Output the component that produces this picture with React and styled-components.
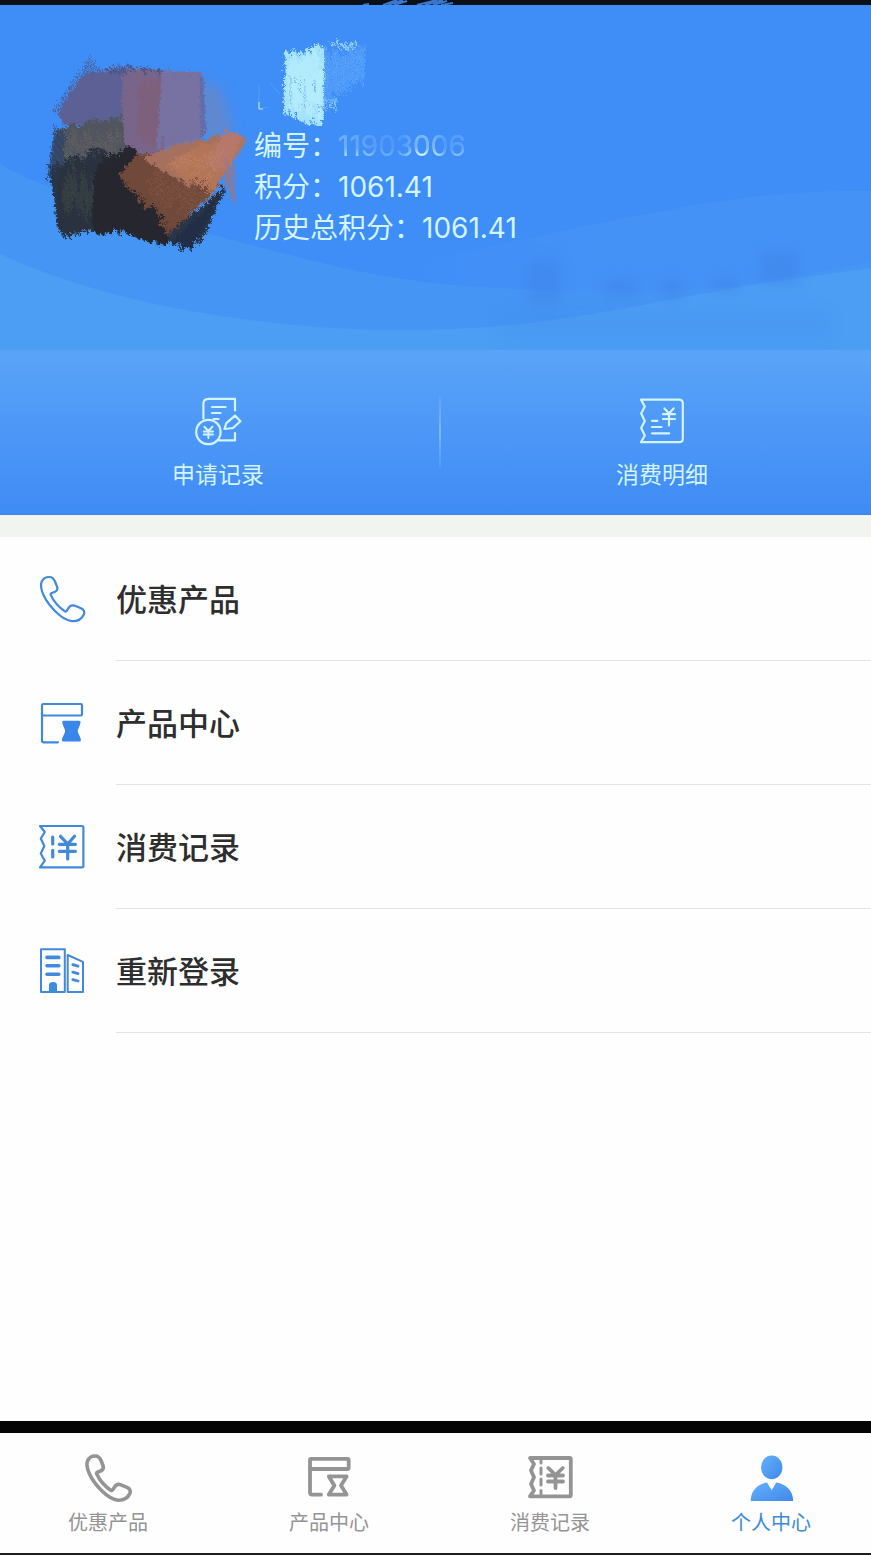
import styled, { createGlobalStyle, css } from "styled-components";

const GlobalStyle = createGlobalStyle`
    * {
        box-sizing: border-box;
    }
    body {
        margin: 0;
        background: #fefefe;
        font-family: Inter, "Noto Sans CJK SC", sans-serif;
    }
    a {
        color: inherit;
        text-decoration: none;
    }
`;

const Page = styled.div`
    min-height: 100vh;
    display: flex;
    flex-direction: column;
`;

const StatusStrip = styled.div`
    height: 5px;
    padding-right: 50px;
    background: #0b1017;
    display: flex;
    justify-content: center;
`;

const Hero = styled.header`
    position: relative;
    height: 345px;
    padding: 25px 24px 0 40px;
    display: flex;
    align-items: flex-start;
    gap: 6px;
    background: #3f8df7;
    color: #d2f5ff;
`;

const Waves = styled.svg`
    position: absolute;
    inset: 0;
    width: 100%;
    height: 100%;
`;

const Avatar = styled.svg`
    position: relative;
    flex: none;
    width: 208px;
    height: 208px;
    margin-top: 16px;
`;

const Info = styled.div`
    position: relative;
    font-size: 28px;
    line-height: 41px;
`;

const NameMark = styled.svg`
    display: block;
    width: 130px;
    height: 96px;
`;

const InfoLine = styled.div`
    white-space: nowrap;
`;

const FadedNumber = styled.span`
    color: transparent;
    background: linear-gradient(
            to bottom,
            rgba(63, 141, 247, 0.6) 55%,
            rgba(63, 141, 247, 0) 75%
        ),
        linear-gradient(
            to right,
            #b4e2ff 0%,
            #8cc6fd 18%,
            #6db0fb 32%,
            #64a9fa 50%,
            #cdf3ff 62%,
            #cdf3ff 74%,
            #6db0fb 84%,
            #8cc4fc 100%
        );
    -webkit-background-clip: text;
    background-clip: text;
`;

const ActionBar = styled.nav`
    height: 165px;
    padding: 0 163px 0 172px;
    display: flex;
    justify-content: space-between;
    background: linear-gradient(#5aa4f8, #4f9af7 40%, #3f8bf5);
    border-bottom: 1px solid #3b86ee;
    color: #d2f5ff;
`;

const Action = styled.a`
    padding-top: 46px;
    display: flex;
    flex-direction: column;
    align-items: center;
    gap: 14px;
    font-size: 23px;
    line-height: 34px;
`;

const ActionDivider = styled.span`
    width: 2px;
    height: 72px;
    align-self: center;
    background: linear-gradient(
        rgba(150, 205, 255, 0.1),
        rgba(150, 205, 255, 0.6),
        rgba(150, 205, 255, 0.1)
    );
`;

const Menu = styled.nav`
    flex: 1;
    border-top: 22px solid #f2f4f0;
`;

const MenuItem = styled.a`
    padding-left: 38px;
    display: flex;
    align-items: center;
    gap: 30px;
    color: #4089dc;
`;

const MenuLabel = styled.span`
    flex: 1;
    height: 124px;
    padding-bottom: 2px;
    display: flex;
    align-items: center;
    border-bottom: 1px solid #e4e4e4;
    color: #2e2e2e;
    font-size: 31px;
    font-weight: 500;
`;

const TabBar = styled.nav`
    padding: 21px 60px 15px 68px;
    display: flex;
    justify-content: space-between;
    border-top: 12px solid #050505;
    border-bottom: 2px solid #1c1c1c;
`;

const Tab = styled.a`
    display: flex;
    flex-direction: column;
    align-items: center;
    gap: 6px;
    font-size: 20px;
    line-height: 30px;
    color: #949494;
    ${({ $active }) =>
        $active &&
        css`
            color: #3d8ad6;
        `}
`;

const Icon = styled.svg.attrs({ viewBox: "0 0 48 48", "aria-hidden": true })`
    flex: none;
    width: 48px;
    height: 48px;
    overflow: visible;
    fill: none;
    stroke: currentColor;
    stroke-width: ${({ $weight }) => $weight || 2.2};
    stroke-linecap: round;
    stroke-linejoin: round;
`;

const PhoneIcon = ({ weight }) => (
    <Icon $weight={weight}>
        <path d="M11.3 2C14 2 16 4 17 6.5L19 11.5C20 14 19 15.8 17 16.8L13.4 18.2Q12.2 18.9 12.9 20.2C14.2 23.5 16.3 26.5 18.8 29.3C21.3 32 23.8 34.3 26.6 36.2Q28 37 28.9 35.6L30.4 33.2C31.8 30.9 33.8 29.8 36.3 30.6L43 33.3C46 34.6 47 37 45.8 39.5C44 43.5 39.5 46.4 34 46.2C28 45.5 22.5 41.5 17.5 36.5C12 31 8 25.5 5.5 20C3 14.5 2 10.5 3.7 6.5C5 3.6 8 2 11.3 2Z" />
    </Icon>
);

const StoreIcon = () => (
    <Icon>
        <rect x="4" y="5" width="40" height="11.5" rx="1.2" />
        <path d="M4 14V41.5Q4 43.3 5.8 43.3H20" />
        <path
            d="M25.4 22.8H41.4C41.6 27 38.6 28.5 38.6 32S41.8 37.5 41.8 41.3H25C25 37.5 28.2 35.5 28.2 32S25.2 27 25.4 22.8Z"
            fill="#3b86ea"
            stroke="#3b86ea"
        />
    </Icon>
);

const StoreTabIcon = () => (
    <Icon $weight={3.8}>
        <rect x="5" y="4.8" width="38.7" height="10.2" rx="1.2" />
        <path d="M5 14V38.5Q5 40.7 7.2 40.7H16" />
        <path d="M23.8 22.4H41.6L36 31.5L41.6 40.6H23.8L29.4 31.5Z" />
    </Icon>
);

const TicketIcon = () => (
    <Icon>
        <path d="M2 3H43.8Q45.4 3 45.4 4.6V42.8Q45.4 44.4 43.8 44.4H2L6.8 37.7L2.8 30.5L6.3 23L2.8 15.5L6.8 9Z" />
        <path
            d="M14.7 14V21M14.7 27.3V34M22.5 13.3L29.7 21L36.5 13.3M29.7 21V36M21.3 21.3H37.4M21.3 28.3H37.4"
            strokeWidth="3.2"
        />
    </Icon>
);

const TicketTabIcon = () => (
    <Icon $weight={3.8}>
        <path d="M4 4H43.5Q44.8 4 44.8 5.3V41Q44.8 42.3 43.5 42.3H4L8 36.5L5 30L8 23.2L5 16.4L8 10Z" />
        <path
            d="M15 6.5V9M15 14V20M15 25V31M15 36.5V39.5"
            strokeWidth="3"
        />
        <path d="M22.3 14L29.5 21L36.8 14M29.5 21V34M22 21.5H37M22 27.5H37" />
    </Icon>
);

const BuildingIcon = () => (
    <Icon $weight={2}>
        <path d="M3 45V2.2H26.8V45ZM29.7 45V8L45 14.8V45Z" />
        <path d="M9 10.4H20.8M9 18.8H20.8M9 27.2H20.8" strokeWidth="3.6" />
        <path
            d="M34.8 17.6L40 19.2M34.8 25.2L40 26.6M34.8 32.6L40 34"
            strokeWidth="2.8"
        />
        <path d="M12 45V38Q12 36 15 36T18 38V45Z" fill="currentColor" />
    </Icon>
);

const ApplyIcon = () => (
    <Icon>
        <path d="M9.4 22.5V8Q9.4 2.8 14.6 2.8H41V14.5M41 37V44.4H25" />
        <path d="M18 11H31.6M18 17H26.5M19.5 23H24.5" />
        <circle cx="14.4" cy="36" r="12.2" />
        <path
            d="M10.4 30.8L14.4 35L18.4 30.8M14.4 35V42M9.8 35.4H19M9.8 38.6H19"
            strokeWidth="2"
        />
        <path d="M30.5 33L32.3 27.2L41 19.6L46.4 25.2L39 32L30.5 33Z" />
    </Icon>
);

const DetailIcon = () => (
    <Icon>
        <path d="M3 3.6H41Q44.8 3.6 44.8 7.4V42.4Q44.8 46.2 41 46.2H3L6.8 39.5L3.2 32L6.8 25L3.2 17.6L6.8 10.5Z" />
        <path d="M26.5 12.4L31 17.5L35.6 12.4M31 17.5V29.6M25 18.2H37M25 23H37" />
        <path d="M14 24.8H19.4M14 31H23.5M14 37.3H31.2" />
    </Icon>
);

const PersonIcon = () => (
    <Icon>
        <defs>
            <linearGradient id="person" x1="0" y1="0" x2="1" y2="1">
                <stop offset="0" stopColor="#64b2f8" />
                <stop offset="1" stopColor="#4187ec" />
            </linearGradient>
        </defs>
        <ellipse
            cx="24.7"
            cy="13.4"
            rx="10.7"
            ry="11.8"
            fill="url(#person)"
            stroke="none"
        />
        <path
            d="M3.7 47C3.9 37 10 30.3 20 28.6L24.7 36.3L29.3 28.6C39.5 30.3 46 37 46.2 47Z"
            fill="url(#person)"
            stroke="none"
        />
    </Icon>
);

// repeatable pseudo random numbers, so the strokes never jump between renders
const noise = (seed) => {
    const n = Math.sin(seed * 12.9898) * 43758.5453;
    return n - Math.floor(n);
};

const mix = (a, b, t) => [a[0] + (b[0] - a[0]) * t, a[1] + (b[1] - a[1]) * t];

// strokes running from the line a-b to the line c-d
const Strokes = ({ a, b, c, d, n, color, width = 2, jitter = 8 }) => {
    let path = "";
    for (let i = 0; i < n; i++) {
        const t = i / (n - 1);
        const from = mix(a, b, t);
        const to = mix(c, d, t);
        const start = mix(from, to, (noise(i + n) * jitter) / 100);
        const end = mix(from, to, 1 - (noise(i * 3 + n) * jitter) / 100);
        path += `M${start.map((v) => v.toFixed(1))}L${end.map((v) => v.toFixed(1))}`;
    }
    return (
        <path
            d={path}
            stroke={color}
            strokeWidth={width}
            strokeLinecap="round"
            fill="none"
        />
    );
};

const avatarBase = [
    { points: "84,72 122,68 122,124 62,124 58,114", color: "#5c6092" },
    { points: "120,68 160,68 160,160 120,156", color: "#77648a" },
    { points: "158,70 200,70 202,134 150,150", color: "#7770a0" },
    { points: "54,128 122,118 126,160 54,190", color: "#52555f" },
    { points: "52,168 128,148 132,228 60,230", color: "#2b323d" },
    { points: "92,162 128,148 168,200 166,238 96,222", color: "#25262e" },
    { points: "124,158 152,148 218,184 196,206 168,230", color: "#6f483b" },
    { points: "148,152 236,134 200,190 168,168", color: "#a97260" },
    { points: "216,192 200,206 160,232 172,242 188,240", color: "#2a3344" },
];

const avatarStrokes = [
    { a: [91, 52], b: [100, 66], c: [50, 112], d: [68, 118], n: 9, color: "#4c5f94", width: 1 },
    { a: [84, 70], b: [124, 64], c: [53, 116], d: [124, 126], n: 30, color: "#5c6194", jitter: 14 },
    { a: [106, 62], b: [160, 63], c: [106, 75], d: [160, 75], n: 20, color: "#4b5685", width: 2, jitter: 70 },
    { a: [122, 68], b: [162, 66], c: [122, 165], d: [160, 155], n: 20, color: "#79658a", width: 3, jitter: 12 },
    { a: [140, 74], b: [158, 72], c: [136, 146], d: [154, 146], n: 10, color: "#7c617b", width: 3, jitter: 20 },
    { a: [162, 66], b: [200, 68], c: [156, 148], d: [203, 140], n: 24, color: "#7772a2", jitter: 18 },
    { a: [198, 70], b: [202, 76], c: [200, 140], d: [204, 132], n: 4, color: "#5d6aa8", width: 1 },
    { a: [55, 124], b: [120, 113], c: [50, 184], d: [124, 172], n: 40, color: "#51555f", width: 2, jitter: 20 },
    { a: [54, 120], b: [66, 124], c: [45, 182], d: [58, 190], n: 12, color: "#2f4468", width: 1, jitter: 20 },
    { a: [64, 126], b: [118, 122], c: [62, 164], d: [118, 155], n: 24, color: "#64625f", width: 1, jitter: 50 },
    { a: [48, 158], b: [68, 154], c: [58, 232], d: [72, 236], n: 14, color: "#28364a", width: 2, jitter: 18 },
    { a: [58, 158], b: [104, 142], c: [56, 238], d: [104, 232], n: 36, color: "#2b3340", width: 2, jitter: 18 },
    { a: [60, 164], b: [92, 158], c: [62, 224], d: [90, 222], n: 20, color: "#3a4444", width: 1, jitter: 50 },
    { a: [96, 158], b: [134, 142], c: [90, 232], d: [134, 234], n: 36, color: "#25262f", width: 3, jitter: 16 },
    { a: [134, 165], b: [170, 205], c: [122, 232], d: [164, 246], n: 30, color: "#26252d", width: 3, jitter: 14 },
    { a: [224, 184], b: [205, 205], c: [198, 242], d: [162, 238], n: 24, color: "#293445", width: 2, jitter: 16 },
    { a: [218, 192], b: [204, 210], c: [188, 251], d: [166, 246], n: 12, color: "#202d45", width: 2, jitter: 18 },
    { a: [140, 150], b: [220, 178], c: [116, 176], d: [166, 234], n: 44, color: "#70493b", width: 3, jitter: 20 },
    { a: [160, 158], b: [220, 186], c: [140, 185], d: [172, 226], n: 30, color: "#845743", width: 1, jitter: 50 },
    { a: [176, 143], b: [222, 134], c: [142, 158], d: [186, 184], n: 34, color: "#a5705d", width: 3, jitter: 18 },
    { a: [204, 140], b: [246, 136], c: [162, 166], d: [208, 194], n: 34, color: "#b37458", width: 2, jitter: 22 },
    { a: [226, 126], b: [242, 130], c: [204, 166], d: [222, 176], n: 12, color: "#b5786b", width: 2, jitter: 18 },
    { a: [190, 148], b: [234, 146], c: [160, 166], d: [200, 184], n: 16, color: "#c28466", width: 1, jitter: 60 },
    { a: [224, 156], b: [234, 160], c: [224, 188], d: [232, 206], n: 7, color: "#9a7784", width: 1, jitter: 20 },
];

const nameStrokes = [
    { a: [285, 48], b: [323, 40], c: [283, 114], d: [320, 128], n: 28, color: "#a5e3fc", width: 2, jitter: 14 },
    { a: [287, 50], b: [321, 46], c: [286, 110], d: [318, 122], n: 16, color: "#b4ecfc", width: 2, jitter: 30 },
    { a: [322, 44], b: [363, 42], c: [324, 106], d: [362, 84], n: 26, color: "#5ba5f9", width: 1, jitter: 26 },
    { a: [330, 36], b: [355, 38], c: [331, 50], d: [354, 50], n: 10, color: "#93d4fc", width: 2, jitter: 60 },
    { a: [323, 92], b: [336, 92], c: [323, 112], d: [333, 114], n: 5, color: "#8ccdfc", width: 1, jitter: 40 },
    { a: [289, 70], b: [318, 72], c: [289, 108], d: [316, 116], n: 7, color: "#74b4ee", width: 1, jitter: 90 },
];

const menu = [
    { label: "优惠产品", icon: <PhoneIcon /> },
    { label: "产品中心", icon: <StoreIcon /> },
    { label: "消费记录", icon: <TicketIcon /> },
    { label: "重新登录", icon: <BuildingIcon /> },
];

const tabs = [
    { label: "优惠产品", icon: <PhoneIcon weight={3.6} /> },
    { label: "产品中心", icon: <StoreTabIcon /> },
    { label: "消费记录", icon: <TicketTabIcon /> },
    { label: "个人中心", icon: <PersonIcon />, active: true },
];

const Background = () => (
    <Waves viewBox="0 5 871 345" preserveAspectRatio="none" aria-hidden="true">
        <defs>
            <filter id="soft" x="-50%" y="-50%" width="200%" height="200%">
                <feGaussianBlur stdDeviation="7" />
            </filter>
            <linearGradient id="crest">
                <stop offset="0" stopColor="#4592f7" stopOpacity="0" />
                <stop offset="0.4" stopColor="#4592f7" />
            </linearGradient>
        </defs>
        <path
            d="M420 262C520 240 600 222 680 208C750 195 810 190 871 191V350H420Z"
            fill="url(#crest)"
        />
        <path
            d="M0 164C60 198 150 218 240 242C330 266 400 284 500 288C600 294 690 292 740 285L871 262V350H0Z"
            fill="#4595f4"
        />
        <path
            d="M0 254C80 290 160 308 250 320C340 332 420 332 500 326C580 320 690 294 760 284C810 276 850 271 871 268V350H0Z"
            fill="#4c9df4"
        />
        <g fill="#3c83e6" opacity="0.5" filter="url(#soft)">
            <rect x="528" y="260" width="32" height="44" />
            <rect x="604" y="278" width="34" height="20" />
            <rect x="660" y="278" width="24" height="20" />
            <rect x="712" y="276" width="26" height="16" />
            <rect x="760" y="250" width="38" height="34" />
            <rect x="500" y="310" width="330" height="30" opacity="0.3" />
        </g>
    </Waves>
);

const App = () => (
    <Page>
        <GlobalStyle />
        <StatusStrip>
            <svg width="100" height="5" viewBox="0 0 100 5" aria-hidden="true">
                <path
                    d="M2 5L8 4M22 5L36 0M27 5L42 0M33 5L46 1M56 5L76 0M64 5L82 0M72 5L86 1M80 5L92 3"
                    stroke="#3a77cb"
                    strokeWidth="2"
                />
            </svg>
        </StatusStrip>

        <Hero>
            <Background />
            <Avatar viewBox="40 46 208 208" aria-hidden="true">
                <defs>
                    <filter id="haze" x="-50%" y="-50%" width="200%" height="200%">
                        <feGaussianBlur stdDeviation="6" />
                    </filter>
                    <filter id="rough">
                        <feTurbulence baseFrequency="0.25" numOctaves="2" />
                        <feDisplacementMap in="SourceGraphic" scale="6" />
                    </filter>
                </defs>
                <polygon
                    points="200,80 222,90 234,132 200,140"
                    fill="#5f88d0"
                    filter="url(#haze)"
                />
                <g filter="url(#rough)">
                    {avatarBase.map(({ points, color }) => (
                        <polygon key={points} points={points} fill={color} />
                    ))}
                    {avatarStrokes.map((s, i) => (
                        <Strokes key={i} {...s} />
                    ))}
                </g>
            </Avatar>
            <Info>
                <NameMark viewBox="254 30 130 96" aria-hidden="true">
                    <g filter="url(#rough)">
                        {nameStrokes.map((s, i) => (
                            <Strokes key={i} {...s} />
                        ))}
                    </g>
                    <path
                        d="M259 84V108M259 109L268 107M270 83L280 94"
                        stroke="#559ef8"
                        fill="none"
                    />
                    <path d="M259 102V109H263" stroke="#c3ecfc" fill="none" />
                </NameMark>
                <InfoLine>
                    编号：<FadedNumber>11903006</FadedNumber>
                </InfoLine>
                <InfoLine>积分：1061.41</InfoLine>
                <InfoLine>历史总积分：1061.41</InfoLine>
            </Info>
        </Hero>

        <ActionBar>
            <Action href="#apply">
                <ApplyIcon />
                申请记录
            </Action>
            <ActionDivider />
            <Action href="#detail">
                <DetailIcon />
                消费明细
            </Action>
        </ActionBar>

        <Menu>
            {menu.map(({ label, icon }) => (
                <MenuItem href="#" key={label}>
                    {icon}
                    <MenuLabel>{label}</MenuLabel>
                </MenuItem>
            ))}
        </Menu>

        <TabBar>
            {tabs.map(({ label, icon, active }) => (
                <Tab href="#" key={label} $active={active}>
                    {icon}
                    {label}
                </Tab>
            ))}
        </TabBar>
    </Page>
);

export default App;
